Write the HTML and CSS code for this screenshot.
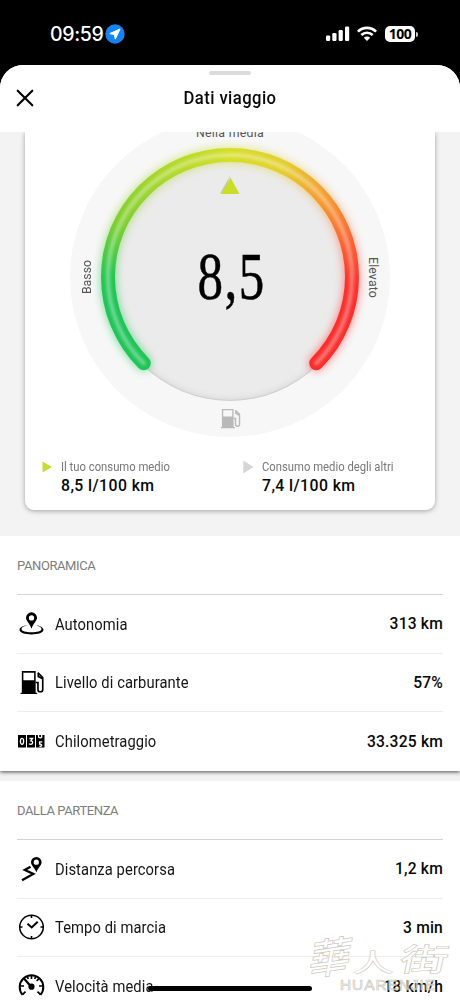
FILE: index.html
```html
<!DOCTYPE html>
<html lang="it">
<head>
<meta charset="utf-8">
<title>Dati viaggio</title>
<link rel="stylesheet" href="styles.css">
</head>
<body>
<div class="phone">
  <div class="status">
    <div class="clock"><span class="time">09:59</span>
      <svg class="locate" width="20" height="20" viewBox="0 0 20 20"><circle cx="10" cy="10" r="9.7" fill="#1683f3"/><path d="M15 5 4.8 9.6l4.5 1 1 4.6z" fill="#fff" stroke="#fff" stroke-linejoin="round"/></svg>
    </div>
    <div class="signals">
      <svg width="24" height="16" viewBox="0 0 24 16" fill="#fff"><rect x="0" y="9.5" width="4.2" height="5.5" rx="1.2"/><rect x="6.3" y="7" width="4.2" height="8" rx="1.2"/><rect x="12.6" y="4" width="4.2" height="11" rx="1.2"/><rect x="19" y="0.5" width="4.2" height="14.5" rx="1.2"/></svg>
      <svg class="wifi" width="20" height="16" viewBox="0 0 20 16" fill="none" stroke="#fff" stroke-width="2.6"><path d="M.9 5.6a13 13 0 0 1 18.2 0M4.3 9a8.3 8.3 0 0 1 11.4 0"/><path d="M10 14.9 6.8 11.7a4.6 4.6 0 0 1 6.4 0z" fill="#fff" stroke="none"/></svg>
      <span class="battery">100</span><i class="nub"></i>
    </div>
  </div>

  <main class="sheet">
    <header class="bar">
      <i class="grabber"></i>
      <div class="heading">
        <svg class="close" width="18" height="18" viewBox="0 0 18 18"><path d="M1.7 1.7l14.6 14.6M16.3 1.7 1.7 16.3" stroke="#000" stroke-width="2.1" stroke-linecap="round"/></svg>
        <h1>Dati viaggio</h1>
      </div>
    </header>

    <section class="summary">
      <div class="card">
        <div class="gauge">
          <div class="dial"></div>
          <div class="glow"><div class="arc"></div></div>
          <div class="arc"></div>
          <svg class="shine" width="320" height="320" viewBox="0 0 320 320">
            <defs><filter id="soft" x="-10%" y="-10%" width="120%" height="120%"><feGaussianBlur stdDeviation="1.8"/></filter></defs>
            <path d="M73.7 246.3a122 122 0 1 1 172.6 0" fill="none" stroke="#fff" stroke-opacity=".36" stroke-width="4" stroke-linecap="round" filter="url(#soft)"/>
            <path d="M160.5 58 150 76.5h4z" fill="#c5c5c5"/><path d="M160.5 60.5 151.3 77h18.2z" fill="#c8de27"/>
          </svg>
          <span class="mark top">Nella media</span>
          <span class="mark low">Basso</span>
          <span class="mark high">Elevato</span>
          <strong class="reading">8,5</strong>
          <svg class="pump" width="21" height="21" viewBox="0 0 24 24"><use href="#fuel"/></svg>
        </div>
        <div class="legend">
          <div class="entry"><svg width="11" height="14" viewBox="0 0 11 14"><path d="M.5 1.5v11l9.5-5.5z" fill="#c5dc30"/></svg><div><small>Il tuo consumo medio</small><b>8,5 l/100 km</b></div></div>
          <div class="entry others"><svg width="11" height="14" viewBox="0 0 11 14"><path d="M.3.5v13L10.5 7z" fill="#d6d6d6"/></svg><div><small>Consumo medio degli altri</small><b>7,4 l/100 km</b></div></div>
        </div>
      </div>
    </section>

    <section class="group overview">
      <h2>PANORAMICA</h2>
      <div class="row">
        <svg width="26" height="26" viewBox="0 0 26 26"><path fill-rule="evenodd" d="M13 1.3a5.5 5.5 0 0 1 5.5 5.5c0 3.2-3.9 5.9-5.5 10.9-1.6-5-5.5-7.7-5.5-10.9A5.5 5.5 0 0 1 13 1.3zm0 3a2.6 2.6 0 1 0 0 5.2 2.6 2.6 0 0 0 0-5.2z"/><path d="M9.2 14.3C4.5 14.8 1 16.5 1 18.8c0 2.8 5.3 4.7 12 4.7s12-1.9 12-4.7c0-2.3-3.5-4-8.2-4.5 3.9.8 6.2 2 6.2 3.8 0 2.1-4.5 3.2-10 3.2s-10-1.1-10-3.2c0-1.8 2.3-3 6.2-3.8z"/></svg>
        <span>Autonomia</span><b>313 km</b>
      </div>
      <div class="row">
        <svg width="26" height="26" viewBox="-1 -1 25 25"><g id="fuel"><path fill="currentColor" fill-rule="evenodd" d="M2.2 1h13.3v20.8H17V23H1v-1.2h1.2zm1.5 1.5v7.3H14V2.5z"/><path d="M15.5 12h2.2v6.6c0 3 4.6 3 4.6 0V7.2l-4.8-4.7M18 3v3.2l4.2 2.2" fill="none" stroke="currentColor" stroke-width="1.6"/></g></svg>
        <span>Livello di carburante</span><b>57%</b>
      </div>
      <div class="row">
        <svg width="27" height="26" viewBox="0 0 27 26"><path d="M0 7h8v12.5H0zM9 7h8v12.5H9zM18 7h8.5v12.5H18z"/><g fill="none" stroke="#fff" stroke-width="1.3"><ellipse cx="4" cy="13.3" rx="1.6" ry="3"/><path d="M11.4 10.5h3.2l-1.7 2.3c2.6.1 2.1 3.5-.2 3.5q-1 0-1.5-.7M20.5 7l.2 2.2q1.8 1.2 3-.2L23.6 7M24.3 13.8h-2.7v2.2c3 0 2.7 2.7-.2 2.3"/></g></svg>
        <span>Chilometraggio</span><b>33.325 km</b>
      </div>
    </section>

    <section class="group trip">
      <h2>DALLA PARTENZA</h2>
      <div class="row">
        <svg width="26" height="26" viewBox="0 0 26 26"><path fill-rule="evenodd" d="M17.8 1a5.3 5.3 0 0 1 5.3 5.3c0 3.2-3.7 5.5-5.1 10.3-1.4-4.3-5.5-7.1-5.5-10.3A5.3 5.3 0 0 1 17.8 1zm0 2.6a2.6 2.6 0 1 0 0 5.2 2.6 2.6 0 0 0 0-5.2z"/><path d="M12 10.8 6.3 14l8.5 3.9-11.3 6.3" fill="none" stroke="#000" stroke-width="2.3"/></svg>
        <span>Distanza percorsa</span><b>1,2 km</b>
      </div>
      <div class="row">
        <svg width="26" height="26" viewBox="0 0 26 26" fill="none" stroke="#000"><circle cx="13" cy="13" r="11.8" stroke-width="1.5"/><path d="M13 1v3M13 22v3M1 13h3M22 13h3" stroke-width="1.6"/><path d="m9 9.7 4.2 3.7 6-5.6" stroke-width="2"/></svg>
        <span>Tempo di marcia</span><b>3 min</b>
      </div>
      <div class="row">
        <svg width="26" height="26" viewBox="0 0 26 26" fill="none" stroke="#000"><path d="M4 21.8a11.8 11.8 0 1 1 18 0" stroke-width="2"/><path d="M13 2v4M20.8 5.2 18.2 8M24.5 13h-4M1.5 13h4M4 21.7l3-3M22 21.7l-3-3M8.5 3l1.3 3M17.5 3l-1.3 3" stroke-width="1.7"/><path d="M5 5l8 9" stroke-width="2.2"/><circle cx="13" cy="13.7" r="3.1" fill="#000" stroke="none"/></svg>
        <span>Velocità media</span><b>18 km/h</b>
      </div>
    </section>
  </main>

  <div class="watermark"><div class="brush"><i>華</i><i>人</i><i>街</i></div><div class="latin">HUARENJIE</div></div>
  <i class="home"></i>
</div>
</body>
</html>
```
FILE: styles.css
```css
* { box-sizing: border-box; }
body { margin: 0; background: #000; font-family: Roboto, "Liberation Sans", sans-serif; color: #111; }
h1, h2 { margin: 0; }
i { font-style: normal; }
.phone { position: relative; width: 460px; height: 1000px; overflow: hidden; background: #000; display: flex; flex-direction: column; }

.status { height: 65px; flex: none; display: flex; justify-content: space-between; align-items: flex-start; padding: 24px 42px 0 50px; color: #fff; }
.clock { display: flex; align-items: center; height: 20px; gap: 2px; }
.time { font: 500 19.5px/20px Inter, sans-serif; width: 53px; letter-spacing: -.35px; }
.signals { display: flex; align-items: center; height: 20px; }
.wifi { margin: 0 8px 0 7px; }
.battery { width: 30px; height: 16px; border-radius: 5px; background: #fff; color: #000; font: 700 14px/16px "Open Sans", sans-serif; text-align: center; letter-spacing: -.5px; }
.nub { width: 2px; height: 5px; margin-left: 1px; border-radius: 0 2px 2px 0; background: #ccc; }

.sheet { flex: 1; min-height: 0; display: flex; flex-direction: column; overflow: hidden; background: #f3f3f3; border-radius: 23px 23px 0 0; }
.bar { flex: none; height: 67px; background: #fff; display: flex; flex-direction: column; align-items: center; padding-top: 6px; }
.grabber { width: 42px; height: 4px; border-radius: 2px; background: #dcdcdc; flex: none; }
.heading { width: 100%; height: 46px; display: grid; grid-template-columns: 50px 1fr 50px; align-items: center; }
.close { margin-left: 16px; }
h1 { font-size: 17.5px; line-height: 22px; font-weight: 500; text-align: center; letter-spacing: .45px; color: #080808; transform: scaleX(.95); }

.summary { flex: none; height: 404px; padding: 0 25px; overflow: hidden; }
.card { display: flow-root; height: 378px; background: #fff; border-radius: 0 0 9px 9px; box-shadow: 0 1px 5px rgba(0,0,0,.34); }
.gauge { display: grid; place-items: center; width: 320px; height: 320px; margin: -15px auto 0; border-radius: 50%; background: #f7f7f7; clip-path: inset(15px 0 0 0); }
.gauge > * { grid-area: 1 / 1; }
.dial { width: 248px; height: 248px; border-radius: 50%; background: #ebebeb; box-shadow: inset 0 0 9px rgba(0,0,0,.12), inset 0 -1px 1px rgba(0,0,0,.08); }
.arc { width: 320px; height: 320px; background: conic-gradient(from 180deg, #20c458 0 22%, #28c653 25%, #7dcf31 32%, #b1d82b 42%, #d5df2b 50%, #e4cf30 57%, #f59a2e 64%, #fb6733 70%, #fa302c 76%, #f72a2d 100%);
  clip-path: path("M68.8 251.2A129 129 0 1 1 251.2 251.2A7 7 0 0 1 241.3 241.3A115 115 0 1 0 78.7 241.3A7 7 0 0 1 68.8 251.2Z"); }
.glow { filter: blur(5px); opacity: .65; }
.shine { position: relative; }
.mark { font-size: 12.3px; line-height: 14px; letter-spacing: .15px; color: #555; white-space: nowrap; }
.mark.top { align-self: start; margin-top: 9px; letter-spacing: .3px; }
.mark.low { justify-self: start; writing-mode: vertical-rl; transform: rotate(180deg); margin-left: 10px; letter-spacing: 0; }
.mark.high { justify-self: end; writing-mode: vertical-rl; margin-right: 10px; }
.reading { font: 400 68px/68px "Liberation Serif", serif; color: #000; -webkit-text-stroke: .5px #000; letter-spacing: 2px; transform: scaleX(.75); margin: -2px -2px 0 0; }
.pump { align-self: end; margin-bottom: 8px; color: #b9b9b9; }
.legend { display: grid; grid-template-columns: 201px 1fr; padding: 22px 0 0 17px; }
.entry { display: flex; gap: 8px; }
.entry svg { flex: none; margin-top: 1px; }
small, b { display: block; white-space: nowrap; }
small { font-size: 12px; line-height: 16px; color: #777; transform: scaleX(.94); transform-origin: left; }
b { font-weight: 500; color: #080808; font-size: 15.6px; letter-spacing: .2px; }
.entry b { line-height: 20px; margin-top: 1px; font-size: 15.8px; letter-spacing: .42px; }

.group { flex: none; background: #fff; padding: 0 17px; }
h2 { height: 59px; line-height: 59px; border-bottom: 1px solid #d4d4d4; font-size: 13px; font-weight: 400; color: #7d7d7d; letter-spacing: -.4px; }
.overview { height: 235px; box-shadow: 0 1px 4px rgba(0,0,0,.7); clip-path: inset(0 0 -8px 0); }
.trip { margin-top: 10px; }
.row { display: flex; align-items: center; height: 58.6px; border-bottom: 1px solid #ededed; color: #000; }
.row:last-child { border: 0; }
.row svg { width: 27px; margin-left: 1px; flex: none; }
.row span { flex: 1; margin: 1px 0 0 9.5px; font-size: 16.2px; color: #151515; letter-spacing: .1px; transform: scaleX(.91); transform-origin: left; }
.row b { margin-top: 1px; }

.watermark { position: absolute; left: 310px; top: 932px; width: 145px; color: rgba(255,255,255,.5); -webkit-text-stroke: .7px #ccc6bb; }
.brush { display: flex; height: 47px; font: 500 42px/46px "Noto Sans CJK TC", sans-serif; }
.brush i { transform: skew(-10deg, -8deg); }
.brush i:nth-child(2) { transform: translateY(6px) scaleY(.6); }
.brush i:nth-child(3) { margin-left: 10px; transform: translateY(2px) skewX(-12deg) scale(1.15, .75); }
.latin { font: 400 15.5px/16px "Liberation Sans", sans-serif; margin: -2px 0 0 30px; letter-spacing: .9px; }
.home { position: absolute; left: 148px; top: 986px; width: 164px; height: 5px; border-radius: 3px; background: #000; }
```
